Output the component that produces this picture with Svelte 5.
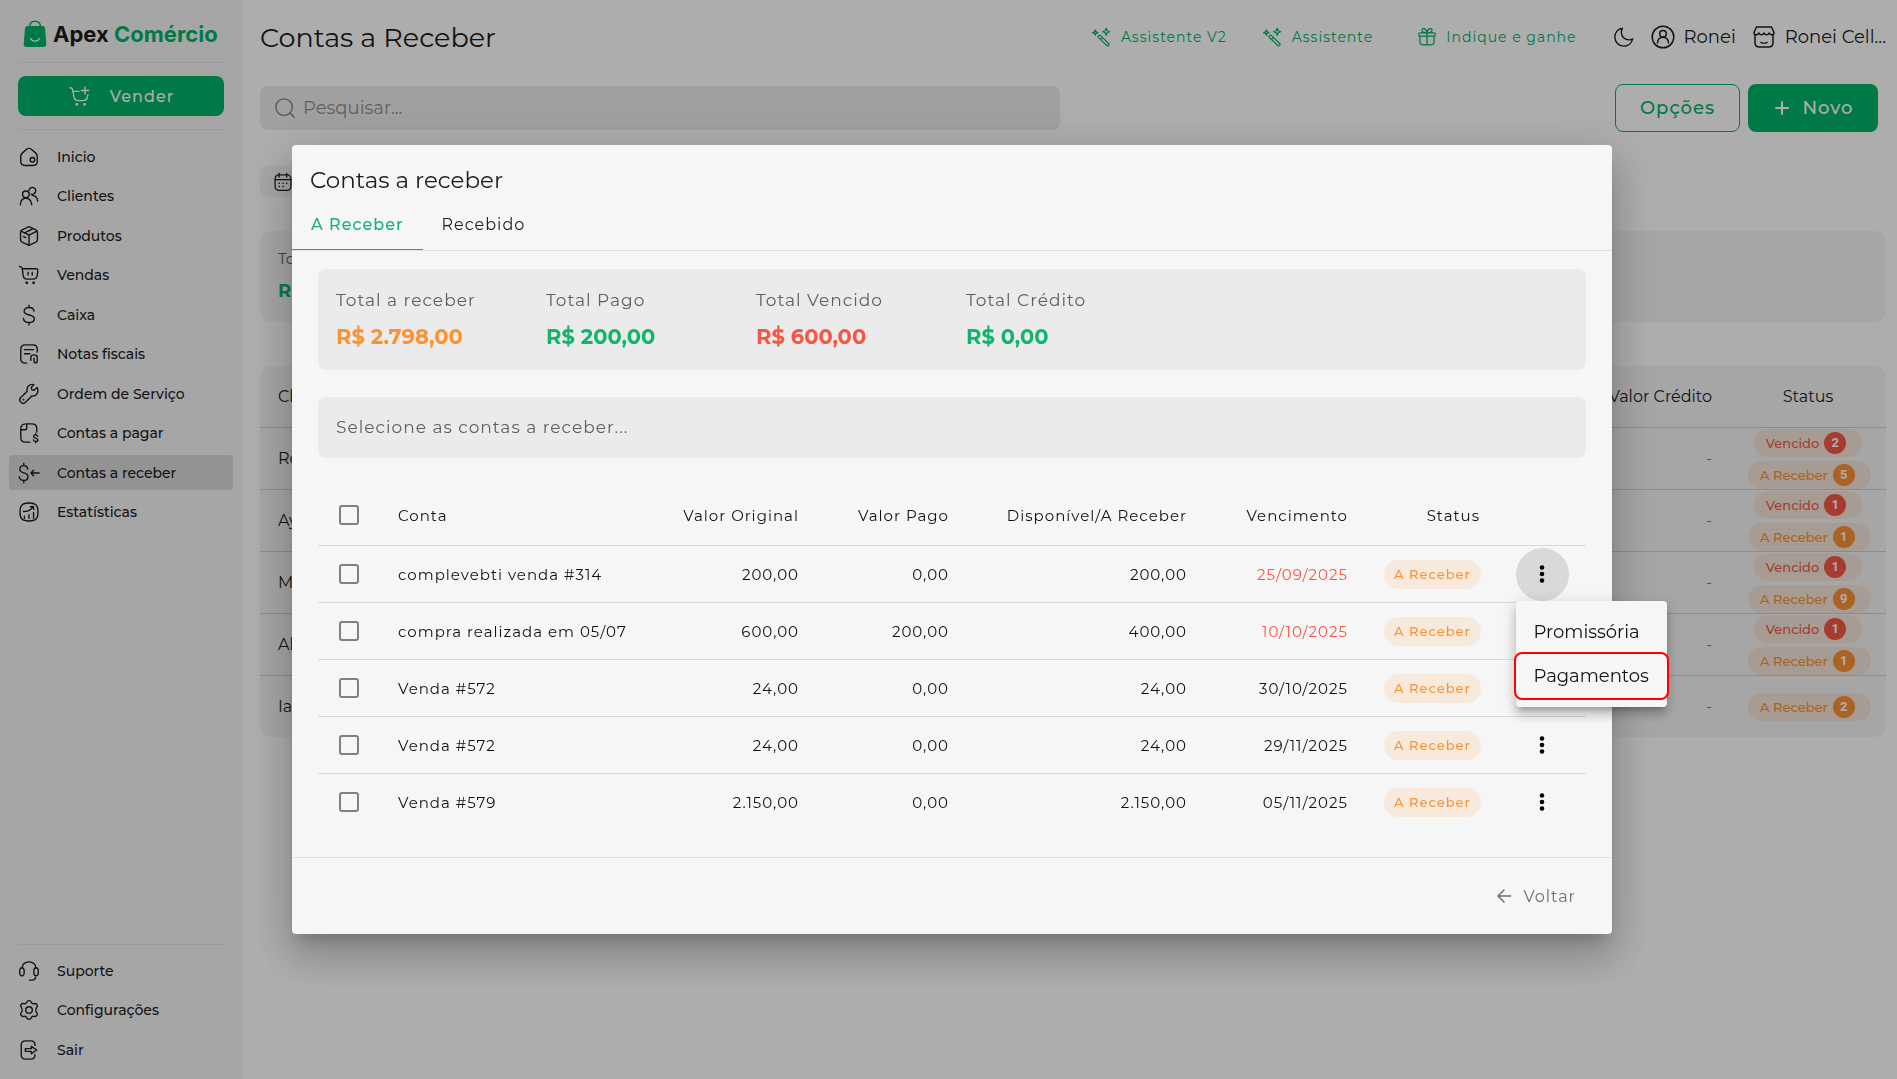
<script lang="ts">
  const icons: Record<string, string> = {
    home: '<path d="M3 11.4c0-1.8.5-2.7 1.9-3.9l4.2-3.7c1.8-1.5 4-1.5 5.8 0l4.2 3.7c1.4 1.2 1.9 2.1 1.9 3.9v5.3c0 3.2-1.4 4.6-4.6 4.6H7.6C4.4 21.300 3 19.900 3 16.700z"/><circle cx="15.800" cy="15" r="2.500"/>',
    users: '<circle cx="8.600" cy="10.200" r="3.600"/><path d="M2.500 21.500c.3-4.700 2.600-7 6.100-7s5.800 2.300 6.400 7"/><path d="M12 6.200a3.700 3.700 0 1 1 5.600 3.300c-1 .7-2.400.8-3.400.4M15.600 11.300c3.300.2 5.400 2.400 5.900 6.300"/>',
    box: '<path d="M12 1.800l7.500 3.500c1.300.7 1.700 1.300 1.700 2.700v8c0 1.400-.4 2-1.700 2.700L12 22.300l-7.500-3.600C3.200 18 2.800 17.400 2.800 16V8c0-1.400.4-2 1.700-2.700z"/><path d="M3.300 6.700L12 11l8.700-4.300M12 11v11M7.300 8.700l9-4.700M6 12.600l2.500 1.200"/>',
    cart: '<path d="M1.500 2.600l2 .7c.9.3 1 .9 1.200 1.900h14.600c1.700 0 2.600.8 2.300 2.500l-.7 5c-.4 2.700-1.600 3.800-4.300 3.800H9.800c-2.700 0-3.700-1.200-4.100-3.800L4.700 5.200M11 9v3M15.500 9v3"/><path d="M9.500 20.500h.1M17 20.500h.1" stroke-width="3"/>',
    dollar: '<path d="M17.500 7.800c-.3-2.500-2.300-4-5.500-4-3.300 0-5.300 1.500-5.300 4 0 5.800 11.200 2.500 11.200 8.300 0 2.600-2.400 4.100-5.900 4.100-3.600 0-5.800-1.700-6-4.400M12 1.200v2.600M12 20.200v2.600"/>',
    receipt: '<path d="M9.500 22H8c-3.500 0-5-1.600-5-5V7c0-3.400 1.500-5 5-5h8.500c3 0 4.500 1.600 4.500 5v3M7 7.200h10M7 11.700h6"/><path d="M14 19v-3.500c0-1.600 1-2.500 3.500-2.500S21 14 21 15.500V19c0 1.800-.6 2.700-1.800 2.700S17.500 21 17.500 19.500V16.500"/>',
    wrench: '<path d="M20.800 4.800l-3.500 3.100-2.200-.6-.7-2.300 3-3.200c-4.800-1.300-8.700 2.500-7.300 7.300L3 15.900c-3.200 3.400 1.900 8.400 5.300 5.200l6.700-7c4.800 1.200 8.200-4 5.800-9.300z"/><path d="M6 18.200h.1" stroke-width="2"/>',
    payable: '<path d="M13 22H8c-3.500 0-5-1.600-5-5V8c0-3.500 2-6 5.500-6H15c3.500 0 5.500 1.600 5.500 5v4M3.500 8.500h4c1.500 0 2-.5 2-2V2.300"/><path d="M21.500 15.500c-.2-1-1.100-1.500-2.300-1.500-1.400 0-2.200.7-2.200 1.700 0 2.600 4.700 1.200 4.700 3.900 0 1-.9 1.700-2.400 1.700-1.400 0-2.300-.6-2.500-1.700M19.300 12.600V14M19.300 21.300v1.500"/>',
    receivable: '<path d="M10.500 7.800c-.2-2.400-1.700-3.900-4.300-3.900-2.500 0-4.200 1.500-4.200 3.900 0 5.500 8.900 2.700 8.900 8.200 0 2.600-1.800 4.100-4.600 4.100-2.900 0-4.700-1.600-4.800-4.200M6.300 1.300v2.600M6.300 20.100v2.600M23 12h-8.500M17 9l-2.800 3 2.800 3"/>',
    chart: '<path d="M2.200 12c0-7.500 2.300-9.800 9.800-9.800s9.800 2.300 9.800 9.800-2.300 9.800-9.800 9.800S2.200 19.500 2.200 12zM7 16.500V19M12 15v4M17 12.500V19M6 11.500c4.500 0 8-1.500 10.500-5M13.500 6.300l3.200-.3.500 3.200"/>',
    headset: '<path d="M4.500 9C4.500 4.800 7.800 2 12 2s7.500 2.800 7.500 7M12.500 22h3c2 0 3.200-1 3.700-3"/><ellipse cx="4.300" cy="12.800" rx="2.500" ry="4.400"/><ellipse cx="19.700" cy="12.800" rx="2.500" ry="4.400"/>',
    gear: '<path d="M9.500 3.500c.8-2.300 4.200-2.300 5 0 .5 1.400 1.800 2 3.200 1.500 2.500-.6 4.300 2 2.700 4.200-1.200 1.400-1.200 4.200 0 5.600 1.600 2.200-.2 4.800-2.700 4.200-1.400-.5-2.700.1-3.200 1.500-.8 2.300-4.200 2.300-5 0-.5-1.400-1.800-2-3.200-1.500-2.500.6-4.300-2-2.700-4.200 1.200-1.400 1.200-4.200 0-5.600C2 7 3.800 4.400 6.300 5c1.400.5 2.700-.1 3.200-1.500z"/><circle cx="12" cy="12" r="3.600"/>',
    exit: '<path d="M18.500 7V6.500c0-3.200-1.200-4.500-4.500-4.500H8.500C5 2 3.500 3.300 3.500 6.700v10.600C3.500 20.700 5 22 8.500 22H14c3.300 0 4.500-1.300 4.500-4.500V17"/><path d="M8 10.500h6.500V8l6 4-6 4v-2.500H8z"/>',
    wand: '<path d="M7.600 10.600c1-1.100 2-1 3 0l9.300 9.200c1.500 1.700-.6 3.700-2.300 2.300l-9.800-9.300c-.8-.8-.9-1.500-.2-2.200zM10.200 15l2.300-2.300"/><path d="M17 1.500l1.200 3 3 1.200-3 1.200-1.200 3-1.200-3-3-1.200 3-1.200zM4 3.500l.9 2.300 2.300.9-2.300.9L4 9.900l-.9-2.300-2.300-.9 2.300-.9z"/>',
    gift: '<path d="M3.500 11v6.500c0 3 1 4 4 4h9c3 0 4-1 4-4V11M2 9c0-1.500.5-2 2-2h16c1.500 0 2 .5 2 2s-.5 2-2 2H4c-1.500 0-2-.5-2-2zM12 7v14.500M12 7C11 1 6 .5 6 4c0 2 2 3 6 3zM12 7c1-6 6-6.500 6-3 0 2-2 3-6 3z"/>',
    moon: '<path d="M21.500 14.100c-1.100.7-2.500 1.100-3.900 1.100-4.700 0-8.500-3.800-8.500-8.500 0-1.600.4-3 1.100-4.200C5.500 3 2 7 2 12c0 5.500 4.200 10 9.700 10 4.700 0 8.700-3.300 9.800-7.900z"/>',
    user: '<circle cx="12" cy="12" r="10.800"/><circle cx="12" cy="8.800" r="3.300"/><path d="M6.500 18c.2-4 2.200-5.800 5.500-5.800s5.300 1.800 5.500 5.800"/>',
    store: '<path d="M3 10v7.500C3 21 4.300 22 7.500 22h9c3.200 0 4.500-1 4.500-4.500V10M9 17.300c1.500 1 4.500 1 6 0"/><path d="M4.500 2h15l2.500 5.500c0 2.800-3.500 3.300-4.800.5-1 2.400-4.200 2.400-5.200 0-1 2.400-4.200 2.400-5.200 0C5.500 10.800 2 10.300 2 7.500z"/>',
    search: '<circle cx="11" cy="11" r="9"/><path d="M17.500 17.500L22 22"/>',
    calendar: '<rect x="2.500" y="3.500" width="19" height="18.500" rx="4.500"/><path d="M7.500 1.500V6M16.500 1.500V6M2.500 9h19"/><path d="M7.500 13.500h.1M12 13.500h.1M16.500 13.500h.1M7.500 17.500h.1M12 17.500h.1" stroke-width="2"/>',
    sell: '<path d="M2 3l1.500.3c1 .3 1.400.8 1.600 1.700l1.600 8.500c.5 2.400 1.600 3.500 4 3.500h6c2.500 0 3.800-1.100 4.300-3.500l.7-3M5 7h7M18.500 2v8M14.500 6h8"/><path d="M9.500 21h.1M18 21h.1" stroke-width="3"/>',
    plus: '<path d="M12 3v18M3 12h18" stroke-width="2.800" stroke-linecap="butt"/>',
    back: '<path d="M22 12H4M12 3l-9 9 9 9" stroke-width="2.200"/>',
  };

  const menu = [
    { icon: 'home', label: 'Inicio' },
    { icon: 'users', label: 'Clientes' },
    { icon: 'box', label: 'Produtos' },
    { icon: 'cart', label: 'Vendas' },
    { icon: 'dollar', label: 'Caixa' },
    { icon: 'receipt', label: 'Notas fiscais' },
    { icon: 'wrench', label: 'Ordem de Serviço' },
    { icon: 'payable', label: 'Contas a pagar' },
    { icon: 'receivable', label: 'Contas a receber', active: true },
    { icon: 'chart', label: 'Estatísticas' },
  ];

  const footerMenu = [
    { icon: 'headset', label: 'Suporte' },
    { icon: 'gear', label: 'Configurações' },
    { icon: 'exit', label: 'Sair' },
  ];

  const clientes = [
    { nome: 'Ro', vencido: 2, receber: 5 },
    { nome: 'Ay', vencido: 1, receber: 1 },
    { nome: 'M', vencido: 1, receber: 9 },
    { nome: 'Al', vencido: 1, receber: 1 },
    { nome: 'Ia', vencido: 0, receber: 2 },
  ];

  const totais = [
    { label: 'Total a receber', valor: 'R$ 2.798,00', cor: 'orange' },
    { label: 'Total Pago', valor: 'R$ 200,00', cor: 'green' },
    { label: 'Total Vencido', valor: 'R$ 600,00', cor: 'red' },
    { label: 'Total Crédito', valor: 'R$ 0,00', cor: 'green' },
  ];

  const contas = [
    { id: 1, nome: 'complevebti venda #314', original: '200,00', pago: '0,00', disponivel: '200,00', vencimento: '25/09/2025', vencida: true },
    { id: 2, nome: 'compra realizada em 05/07', original: '600,00', pago: '200,00', disponivel: '400,00', vencimento: '10/10/2025', vencida: true },
    { id: 3, nome: 'Venda #572', original: '24,00', pago: '0,00', disponivel: '24,00', vencimento: '30/10/2025', vencida: false },
    { id: 4, nome: 'Venda #572', original: '24,00', pago: '0,00', disponivel: '24,00', vencimento: '29/11/2025', vencida: false },
    { id: 5, nome: 'Venda #579', original: '2.150,00', pago: '0,00', disponivel: '2.150,00', vencimento: '05/11/2025', vencida: false },
  ];

  let tab = $state('receber');
  let openMenu = $state<number | null>(1);
  let selected = $state<number[]>([]);
  let busca = $state('');

  function toggleMenu(id: number) {
    openMenu = openMenu === id ? null : id;
  }

  function toggleAll(event: Event) {
    const checked = (event.currentTarget as HTMLInputElement).checked;
    selected = checked ? contas.map((c) => c.id) : [];
  }
</script>

{#snippet icon(name: string, size = 22)}
  <svg class="icon" width={size} height={size} viewBox="0 0 24 24" aria-hidden="true">
    {@html icons[name]}
  </svg>
{/snippet}

<div class="page">
  <aside class="sidebar">
    <a class="logo" href="#inicio">
      <svg width="24" height="28" viewBox="0 0 24 28" aria-hidden="true">
        <path d="M6.500 7C6.500 3.500 8.500 1.200 12 1.200S17.500 3.500 17.500 7" fill="none" stroke="#00b368" stroke-width="1.500" />
        <path d="M4.500 6h15c1.500 0 2.300.8 2.500 2.300l1.300 15.400c.2 2-1 3.300-3 3.300H3.700c-2 0-3.200-1.300-3-3.300L2 8.300C2.200 6.800 3 6 4.500 6z" fill="#00b368" />
        <path d="M7.500 18c1.700 4.200 7.300 4.200 9 0" fill="none" stroke="#fff" stroke-width="1.200" />
      </svg>
      <span>Apex <b>Comércio</b></span>
    </a>

    <hr />
    <button class="btn-sell">{@render icon('sell')} <span>Vender</span></button>
    <hr />

    <nav class="menu" aria-label="Principal">
      {#each menu as item (item.label)}
        <a href="#{item.icon}" class:active={item.active}>
          {@render icon(item.icon)}
          {item.label}
        </a>
      {/each}
    </nav>

    <div class="spacer"></div>
    <hr />
    <nav class="menu menu-footer" aria-label="Conta">
      {#each footerMenu as item (item.label)}
        <a href="#{item.icon}">
          {@render icon(item.icon)}
          {item.label}
        </a>
      {/each}
    </nav>
  </aside>

  <main class="content">
    <header class="topbar">
      <h1>Contas a Receber</h1>
      <button class="link">{@render icon('wand', 20)} Assistente V2</button>
      <button class="link">{@render icon('wand', 20)} Assistente</button>
      <button class="link gift">{@render icon('gift', 20)} Indique e ganhe</button>
      <button class="account" aria-label="Tema escuro">{@render icon('moon')}</button>
      <button class="account">{@render icon('user', 24)} Ronei</button>
      <button class="account">{@render icon('store', 24)} Ronei Cell...</button>
    </header>

    <div class="toolbar">
      <label class="search">
        {@render icon('search')}
        <input type="text" placeholder="Pesquisar..." aria-label="Pesquisar" bind:value={busca} />
      </label>
      <div class="toolbar-actions">
        <button class="btn-outline">Opções</button>
        <button class="btn-new">{@render icon('plus', 18)} Novo</button>
      </div>
    </div>

    <button class="period" aria-label="Período">{@render icon('calendar', 20)}</button>

    <section class="page-total">
      <span>Total</span>
      <strong class="green">R$</strong>
    </section>

    <table class="clients">
      <thead>
        <tr>
          <th>Cliente</th>
          <th class="right">Valor Crédito</th>
          <th class="status">Status</th>
        </tr>
      </thead>
      <tbody>
        {#each clientes as c (c.nome)}
          <tr>
            <td>{c.nome}</td>
            <td class="right empty">-</td>
            <td class="status">
              {#if c.vencido}
                <span class="chip red">Vencido <b>{c.vencido}</b></span>
              {/if}
              <span class="chip orange">A Receber <b>{c.receber}</b></span>
            </td>
          </tr>
        {/each}
      </tbody>
    </table>
  </main>
</div>

<div class="overlay">
  <div class="modal" role="dialog" aria-modal="true" aria-labelledby="modal-title">
    <h2 id="modal-title">Contas a receber</h2>

    <div class="tabs" role="tablist">
      <button role="tab" aria-selected={tab === 'receber'} class:active={tab === 'receber'} onclick={() => (tab = 'receber')}>A Receber</button>
      <button role="tab" aria-selected={tab === 'recebido'} class:active={tab === 'recebido'} onclick={() => (tab = 'recebido')}>Recebido</button>
    </div>

    <div class="modal-body">
      <div class="totals">
        {#each totais as t (t.label)}
          <div class="total">
            <span>{t.label}</span>
            <strong class={t.cor}>{t.valor}</strong>
          </div>
        {/each}
      </div>

      <div class="hint">Selecione as contas a receber...</div>

      <table class="bills">
        <colgroup>
          <col class="c-check" />
          <col />
          <col class="c-original" />
          <col class="c-paid" />
          <col class="c-available" />
          <col class="c-due" />
          <col class="c-status" />
          <col class="c-actions" />
        </colgroup>
        <thead>
          <tr>
            <th class="check">
              <input type="checkbox" aria-label="Selecionar todas" checked={selected.length === contas.length} onchange={toggleAll} />
            </th>
            <th>Conta</th>
            <th class="right">Valor Original</th>
            <th class="right">Valor Pago</th>
            <th class="right">Disponível/A Receber</th>
            <th class="right">Vencimento</th>
            <th class="right">Status</th>
            <th></th>
          </tr>
        </thead>
        <tbody>
          {#each contas as conta (conta.id)}
            <tr>
              <td class="check">
                <input type="checkbox" aria-label="Selecionar {conta.nome}" value={conta.id} bind:group={selected} />
              </td>
              <td>{conta.nome}</td>
              <td class="right">{conta.original}</td>
              <td class="right">{conta.pago}</td>
              <td class="right">{conta.disponivel}</td>
              <td class="right" class:red={conta.vencida}>{conta.vencimento}</td>
              <td class="right"><span class="badge">A Receber</span></td>
              <td class="actions">
                <div class="action">
                  <button class="dots" class:open={openMenu === conta.id} aria-label="Ações" aria-expanded={openMenu === conta.id} onclick={() => toggleMenu(conta.id)}>
                    <svg width="6" height="20" viewBox="0 0 6 20" aria-hidden="true">
                      <circle cx="3" cy="3.500" r="2.300" />
                      <circle cx="3" cy="10" r="2.300" />
                      <circle cx="3" cy="16.500" r="2.300" />
                    </svg>
                  </button>
                  {#if openMenu === conta.id}
                    <div class="dropdown" role="menu">
                      <button role="menuitem">Promissória</button>
                      <button role="menuitem" class="highlight">Pagamentos</button>
                    </div>
                  {/if}
                </div>
              </td>
            </tr>
          {/each}
        </tbody>
      </table>
    </div>

    <footer class="modal-footer">
      <button class="btn-back">{@render icon('back', 16)} Voltar</button>
    </footer>
  </div>
</div>

<style>
  :global(body) {
    margin: 0;
    background: #fff;
    color: #1c1c1c;
    font-family: Montserrat, Inter, sans-serif;
    font-size: 15px;
  }

  :global(#app) {
    --green: #00b368;
    --orange: #fb9334;
    --red: #f55746;
  }

  button,
  input {
    font-family: inherit;
    color: inherit;
  }

  button {
    display: flex;
    align-items: center;
    justify-content: center;
    padding: 0;
    border: none;
    background: none;
    cursor: pointer;
    white-space: nowrap;
  }

  a {
    color: inherit;
    text-decoration: none;
  }

  .icon {
    flex-shrink: 0;
    fill: none;
    stroke: currentColor;
    stroke-width: 1.5;
    stroke-linecap: round;
    stroke-linejoin: round;
  }

  .green {
    color: #14b36f;
  }

  .orange {
    color: var(--orange);
  }

  .red {
    color: var(--red);
  }

  .page {
    display: flex;
    min-height: 100vh;
  }

  /* sidebar */
  .sidebar {
    display: flex;
    flex-direction: column;
    width: 242px;
    flex-shrink: 0;
    box-sizing: border-box;
    padding: 18px 9px 12px;
    background: #f5f5f5;
  }

  .sidebar hr {
    width: 206px;
    height: 1px;
    margin: 0 9px;
    border: none;
    background: #e6e6e6;
  }

  .logo {
    display: flex;
    align-items: center;
    gap: 6px;
    height: 32px;
    margin: 0 0 12px 14px;
    font-family: Inter, sans-serif;
    font-size: 22px;
    font-weight: 700;
    white-space: nowrap;
  }

  .logo b {
    color: var(--green);
    font-weight: 700;
  }

  .btn-sell {
    gap: 20px;
    height: 40px;
    margin: 13px 9px;
    border-radius: 8px;
    background: var(--green);
    color: #fff;
    font-size: 16px;
    font-weight: 500;
    letter-spacing: 1px;
  }

  .menu {
    display: flex;
    flex-direction: column;
    justify-content: space-between;
    height: 391px;
    margin-top: 9px;
  }

  .menu-footer {
    height: 114px;
    margin-top: 8px;
  }

  .menu a {
    display: flex;
    align-items: center;
    gap: 17px;
    height: 35px;
    padding-left: 9px;
    border-radius: 4px;
    font-size: 14px;
    font-weight: 500;
  }

  .menu a.active {
    background: #d9d9d9;
  }

  .spacer {
    flex: 1;
  }

  /* page behind the dialog */
  .content {
    flex: 1;
    min-width: 0;
    padding: 18px 11px 0 18px;
  }

  .topbar {
    display: flex;
    align-items: center;
    height: 38px;
  }

  h1 {
    flex: 1;
    margin: 0;
    font-size: 27px;
    font-weight: 400;
    white-space: nowrap;
  }

  .link {
    gap: 9px;
    margin-right: 36px;
    color: var(--green);
    font-size: 14px;
    letter-spacing: 1px;
  }

  .link.gift {
    margin-left: 8px;
  }

  .account {
    gap: 9px;
    margin-left: 16px;
    font-size: 18px;
  }

  .link + .account {
    margin-left: 0;
  }

  .toolbar {
    display: flex;
    align-items: center;
    justify-content: space-between;
    height: 48px;
    margin-top: 28px;
    padding-right: 8px;
  }

  .search {
    display: flex;
    align-items: center;
    gap: 7px;
    width: 100%;
    max-width: 800px;
    height: 44px;
    box-sizing: border-box;
    padding: 0 14px;
    border-radius: 8px;
    background: #ececec;
    color: #808080;
  }

  .search input {
    flex: 1;
    padding: 0;
    border: none;
    outline: none;
    background: none;
    font-size: 18px;
  }

  .search input::placeholder {
    color: #909090;
  }

  .toolbar-actions {
    display: flex;
    gap: 8px;
  }

  .btn-outline,
  .btn-new {
    height: 48px;
    box-sizing: border-box;
    border-radius: 8px;
    font-size: 18px;
    font-weight: 500;
    letter-spacing: 1px;
  }

  .btn-outline {
    width: 125px;
    border: 1px solid var(--green);
    color: var(--green);
  }

  .btn-new {
    gap: 12px;
    width: 130px;
    background: var(--green);
    color: #fff;
  }

  .period {
    justify-content: flex-start;
    width: 240px;
    height: 31px;
    margin-top: 34px;
    padding-left: 13px;
    border-radius: 8px;
    background: #f5f5f5;
  }

  .page-total {
    display: flex;
    flex-direction: column;
    gap: 12px;
    height: 91px;
    box-sizing: border-box;
    margin-top: 34px;
    padding: 18px;
    border-radius: 10px;
    background: #f5f5f5;
    line-height: 20px;
    color: #606060;
  }

  .page-total strong {
    font-size: 18px;
  }

  table {
    width: 100%;
    border-collapse: collapse;
    table-layout: fixed;
  }

  th,
  td {
    padding: 0 18px;
    text-align: left;
    font-weight: 400;
    white-space: nowrap;
  }

  .right {
    text-align: right;
  }

  .clients {
    margin-top: 44px;
    border-radius: 10px;
    background: #f5f5f5;
    font-size: 16px;
  }

  .clients th {
    height: 61px;
  }

  .clients td {
    height: 61px;
  }

  .clients tbody tr {
    border-top: 1px solid #cfcfcf;
  }

  .clients .empty {
    color: #808080;
  }

  .clients .status {
    width: 120px;
    text-align: center;
  }

  .chip {
    display: flex;
    align-items: center;
    gap: 5px;
    width: fit-content;
    height: 28px;
    margin: 0 auto;
    padding: 0 16px 0 12px;
    border-radius: 14px;
    background: #f7e6db;
    font-size: 13px;
    font-weight: 500;
  }

  .chip + .chip {
    margin-top: 4px;
  }

  .chip b {
    width: 22px;
    border-radius: 50%;
    background: currentColor;
    font-family: Roboto, sans-serif;
    line-height: 22px;
    text-align: center;
    -webkit-text-fill-color: #fff;
  }

  /* dialog */
  .overlay {
    position: fixed;
    inset: 0;
    display: flex;
    align-items: center;
    justify-content: center;
    padding-left: 7px;
    background: rgba(0, 0, 0, 0.32);
  }

  .modal {
    width: 100%;
    max-width: 1320px;
    border-radius: 4px;
    background: #f6f6f6;
    box-shadow:
      0 11px 15px -7px rgba(0, 0, 0, 0.2),
      0 24px 38px 3px rgba(0, 0, 0, 0.14),
      0 9px 46px 8px rgba(0, 0, 0, 0.12);
  }

  h2 {
    margin: 0;
    padding: 19px 18px 4px;
    font-size: 23px;
    font-weight: 400;
    line-height: 32px;
  }

  .tabs {
    display: flex;
    border-bottom: 1px solid #e2e2e2;
  }

  .tabs button {
    height: 50px;
    padding: 0 19px;
    border-bottom: 1px solid transparent;
    font-size: 16px;
    letter-spacing: 1px;
  }

  .tabs button.active {
    border-color: #14b36f;
    color: #14b36f;
    font-weight: 500;
  }

  .modal-body {
    display: flex;
    flex-direction: column;
    gap: 27px;
    padding: 18px 26px 27px;
  }

  .totals {
    display: flex;
    padding: 18px 18px 20px;
    border-radius: 8px;
    background: #ebebeb;
  }

  .total {
    display: flex;
    flex-direction: column;
    gap: 9px;
    width: 210px;
    line-height: 27px;
  }

  .total span {
    color: #606060;
    font-size: 17px;
    letter-spacing: 1px;
  }

  .total strong {
    font-size: 21px;
    font-weight: 700;
  }

  .hint {
    padding: 0 18px;
    border-radius: 8px;
    background: #ebebeb;
    color: #606060;
    font-size: 17px;
    letter-spacing: 1px;
    line-height: 61px;
  }

  .bills {
    color: #111;
    letter-spacing: 1px;
  }

  .bills th {
    height: 60px;
  }

  .bills td {
    height: 56px;
  }

  .bills tbody tr {
    border-top: 1px solid #d9d9d9;
  }

  .c-check {
    width: 62px;
  }

  .c-original {
    width: 177px;
  }

  .c-paid {
    width: 150px;
  }

  .c-available {
    width: 238px;
  }

  .c-due {
    width: 161px;
  }

  .c-status {
    width: 132px;
  }

  .c-actions {
    width: 88px;
  }

  .bills .check {
    padding: 0 21px;
  }

  .check input {
    display: block;
    width: 20px;
    height: 20px;
    margin: 0;
    border: 2px solid #808080;
    border-radius: 3px;
    appearance: none;
  }

  .check input:checked {
    border-color: var(--green);
    background: var(--green);
  }

  .bills .red {
    color: var(--red);
  }

  .badge {
    display: inline-block;
    padding: 0 10px;
    border-radius: 15px;
    background: #f7eadc;
    color: var(--orange);
    font-size: 13px;
    font-weight: 500;
    line-height: 29px;
  }

  .bills .actions {
    padding: 0;
  }

  .action {
    position: relative;
    width: 53px;
    margin: 0 auto;
  }

  .dots {
    width: 53px;
    height: 53px;
    border-radius: 50%;
  }

  .dots.open {
    background: #d9d9d9;
  }

  .dropdown {
    position: absolute;
    top: 100%;
    left: 0;
    z-index: 1;
    width: 151px;
    padding: 9px 0;
    border-radius: 4px;
    background: #f6f6f6;
    box-shadow:
      0 5px 5px -3px rgba(0, 0, 0, 0.2),
      0 8px 10px 1px rgba(0, 0, 0, 0.14),
      0 3px 14px 2px rgba(0, 0, 0, 0.12);
    letter-spacing: normal;
  }

  .dropdown button {
    justify-content: flex-start;
    width: 100%;
    height: 44px;
    padding-left: 18px;
    font-size: 18px;
  }

  .dropdown .highlight {
    border-radius: 6px;
    outline: 2px solid #f00;
  }

  .modal-footer {
    display: flex;
    justify-content: flex-end;
    padding: 20px 36px;
    border-top: 1px solid #e2e2e2;
  }

  .btn-back {
    gap: 11px;
    height: 36px;
    color: #6e6e6e;
    font-size: 16px;
    letter-spacing: 1px;
  }
</style>
